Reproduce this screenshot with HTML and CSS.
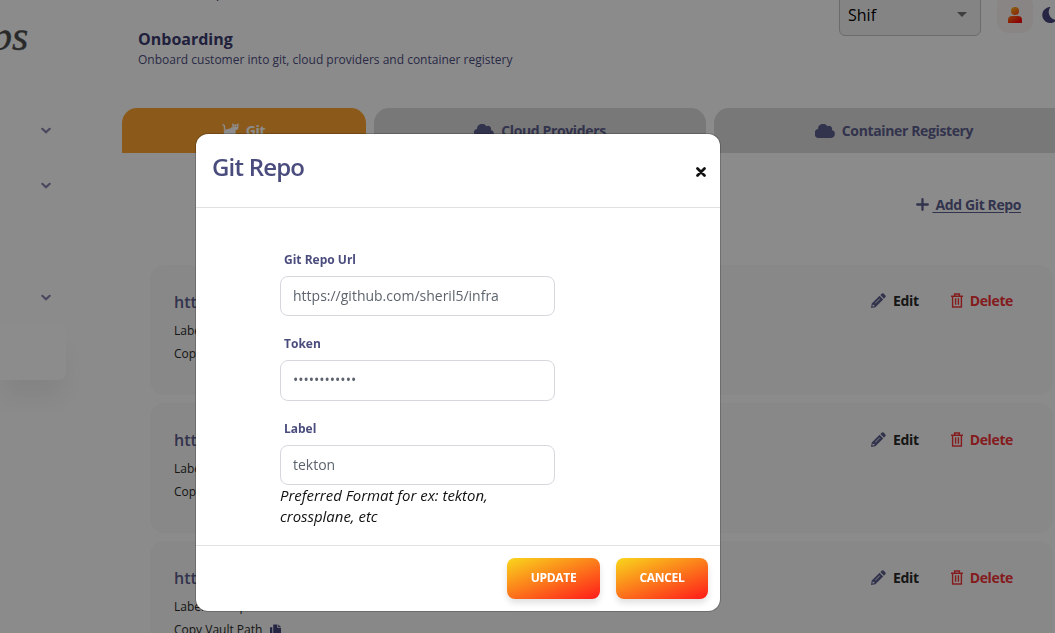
FILE: index.html
```html
<!DOCTYPE html>
<html lang="en">
<head>
<meta charset="utf-8">
<title>Onboarding</title>
<link rel="stylesheet" href="styles.css">
</head>
<body>
<svg class="defs" width="0" height="0">
  <defs>
    <linearGradient id="warm" x1="0" y1="0" x2="0.6" y2="1"><stop offset="0" stop-color="#fbc91b"/><stop offset="1" stop-color="#ff0a0a"/></linearGradient>
    <symbol id="cloud" viewBox="0 0 20 14"><path d="M16.700 6.100A3 3 0 0 0 12.300 2.300 5 5 0 0 0 3 4.700v.4A4.500 4.500 0 0 0 4.500 14H16a4 4 0 0 0 .7-7.900z"/></symbol>
    <symbol id="chev" viewBox="0 0 10 7"><path d="M1.300 1.800 5 5.300l3.700-3.500" fill="none" stroke="currentColor" stroke-width="2.200" stroke-linecap="round"/></symbol>
    <symbol id="pencil" viewBox="0 0 14 14"><path fill-rule="evenodd" d="M0 14 .7 9.900 8 2.600l3.400 3.400L4.100 13.300zM8.700 1.900 10.200.5Q11 0 11.700.5l1.800 1.800q.6.700 0 1.500L12.100 5.300zM1.600 10.900l-.3 1.800 1.800-.3v-1.100H2v-.8zM3.800 9.300l4.100-4.100.4.400-4.100 4.100z"/></symbol>
    <symbol id="trash" viewBox="0 0 12 15"><path d="M0 3.300h12M3.600 3V1h4.800v2M1.600 3.500V14h8.800V3.500M4.600 5.300v6.400M7.400 5.300v6.400" fill="none" stroke="currentColor" stroke-width="1.400"/></symbol>
    <symbol id="copy" viewBox="0 0 12 13"><path d="M0 3h2.500v8H8v2H0zM3.500 0H8v3.500h4V10H3.500zM9 0l3 2.700H9z"/></symbol>
  </defs>
</svg>
<div class="app">
  <aside class="sidebar">
    <div class="logo">ps</div>
    <div class="menu">
      <svg class="chev"><use href="#chev"/></svg>
      <svg class="chev"><use href="#chev"/></svg>
      <svg class="chev last"><use href="#chev"/></svg>
    </div>
    <div class="active-item"></div>
  </aside>
  <main class="main">
    <header class="top">
      <div class="heading">
        <div class="crumbs"><span>Home / Setup</span><b>Onboarding</b></div>
        <h1>Onboarding</h1>
        <p>Onboard customer into git, cloud providers and container registery</p>
      </div>
      <div class="tools">
        <div class="select">Shif<span class="caret"></span></div>
        <div class="avatar"><svg width="14" height="16" viewBox="0 0 14 16"><path d="M11 4a4 4 0 1 1-8 0 4 4 0 0 1 8 0zM0 16v-3q0-4 4-4h6q4 0 4 4v3z"/></svg></div>
        <svg class="moon" width="16" height="16" viewBox="0 0 16 16"><path d="M9.500 0A8 8 0 1 0 15.500 13 8 8 0 0 1 9.500 0z"/></svg>
      </div>
    </header>
    <nav class="tabs">
      <div class="tab tab-git"><svg width="17" height="15" viewBox="0 0 17 15"><path d="M.5 1.800q2 0 2 2.200v3.500" fill="none" stroke="currentColor" stroke-width="1.400"/><path d="M1.800 8.500q1-2.500 4-2.500 2.500 0 4.200-2 1 2.800 3.600 3.200V15H11l-1-3-3.500.4L5 15H2z"/><path d="M10.300 0 12 1.600h2.800L16.500 0v4a3.100 3.100 0 0 1-6.200 0z"/><path d="M11.600 3.200h1.200M14 3.200h1.200" stroke="#fda430"/></svg><span>Git</span></div>
      <div class="tab tab-cloud"><svg width="20" height="14"><use href="#cloud"/></svg><span>Cloud Providers</span></div>
      <div class="tab tab-reg"><svg width="20" height="14"><use href="#cloud"/></svg><span>Container Registery</span></div>
    </nav>
    <div class="add"><svg width="13" height="13" viewBox="0 0 13 13"><path d="M6.500 1.200v10.600M1.200 6.500h10.600" stroke="currentColor" stroke-width="2.300" stroke-linecap="round"/></svg><span>&nbsp;Add Git Repo</span></div>
    <section class="repos">
      <article class="repo">
        <div class="info"><h2>https:</h2><p>Label:</p><p>Copy</p></div>
        <div class="acts"><svg width="15" height="15"><use href="#pencil"/></svg><span>Edit</span><span class="del"><svg width="12" height="15"><use href="#trash"/></svg>Delete</span></div>
      </article>
      <article class="repo">
        <div class="info"><h2>https:</h2><p>Label:</p><p>Copy</p></div>
        <div class="acts"><svg width="15" height="15"><use href="#pencil"/></svg><span>Edit</span><span class="del"><svg width="12" height="15"><use href="#trash"/></svg>Delete</span></div>
      </article>
      <article class="repo">
        <div class="info"><h2>https:</h2><p>Label: crossplane</p><p>Copy Vault Path <svg class="copy" width="11" height="13"><use href="#copy"/></svg></p></div>
        <div class="acts"><svg width="15" height="15"><use href="#pencil"/></svg><span>Edit</span><span class="del"><svg width="12" height="15"><use href="#trash"/></svg>Delete</span></div>
      </article>
    </section>
  </main>
</div>
<div class="overlay">
  <div class="modal">
    <div class="modal-head"><h3>Git Repo</h3><svg width="10" height="10" viewBox="0 0 10 10"><path d="M1.500 1.500l7 7M8.500 1.500l-7 7" stroke="#111" stroke-width="2.700" stroke-linecap="round"/></svg></div>
    <div class="modal-body">
      <label>Git Repo Url</label>
      <div class="field">https://github.com/sheril5/infra</div>
      <label>Token</label>
      <div class="field tall">••••••••••••</div>
      <label>Label</label>
      <div class="field">tekton</div>
      <div class="hint">Preferred Format for ex: tekton, crossplane, etc</div>
    </div>
    <div class="modal-foot"><div class="btn update">UPDATE</div><div class="btn">CANCEL</div></div>
  </div>
</div>
</body>
</html>
```
FILE: styles.css
```css
* { box-sizing: border-box; }
body { margin: 0; height: 633px; overflow: hidden; background: #fefefe; font-family: "Open Sans", "Noto Sans", sans-serif; color: #222; }
h1, h2, h3, p { margin: 0; }
svg { fill: currentColor; flex: none; }
.defs { position: absolute; }
.app { display: flex; height: 633px; overflow: hidden; }
.sidebar { width: 122px; flex: none; color: #8583ab; }
.logo { height: 120px; padding: 12px 0 0; margin-left: -9px; font: italic 42px/48px "Liberation Serif", serif; color: #4c4c4c; -webkit-text-stroke: .4px #4c4c4c; }
.menu { display: flex; flex-direction: column; padding: 7px 0 0 41px; }
.chev { width: 10px; height: 7px; margin-bottom: 48px; }
.chev.last { margin: 57px 0 23px; }
.active-item { width: 66px; height: 56px; background: #fff; border-radius: 0 8px 8px 0; box-shadow: 0 20px 27px rgba(0,0,0,.06); }
.main { flex: 1; min-width: 0; color: #5c5d8c; }
.top { display: flex; justify-content: space-between; height: 108px; }
.heading { padding-left: 16px; }
.crumbs { display: flex; height: 20px; margin-top: -18px; font-size: 14px; line-height: 20px; white-space: pre; color: #343468; }
.crumbs span { width: 98px; padding-left: 1px; letter-spacing: -.4px; }
.crumbs b { letter-spacing: -.4px; }
h1 { margin-top: 25px; font-size: 16px; line-height: 24px; color: #3b3b70; }
.heading p { font-size: 12px; line-height: 17px; color: #4c4d7e; }
.tools { display: flex; flex: none; width: 216px; }
.select { flex: none; width: 142px; height: 46px; margin-top: -10px; padding: 12px 8px 8px; border: 1px solid #c4c4c4; border-radius: 6px; background: #f1f1f1; color: #000; font-size: 16px; line-height: 22px; display: flex; justify-content: space-between; align-items: center; }
.caret { border: 5px solid transparent; border-top-color: #737373; border-bottom: 0; margin: -1px 5px 0 0; }
.avatar { flex: none; width: 36px; height: 40px; margin: -7px 8px 0 16px; padding: 14px 11px; border-radius: 12px; background: #f9f2f2; }
.avatar svg { display: block; fill: url(#warm); }
.moon { margin-top: 7px; color: #45457c; }
.tabs { display: flex; gap: 8px; }
.tab { flex: none; height: 45px; display: flex; justify-content: center; align-items: center; gap: 7px; border-radius: 15px 15px 0 0; background: #dadada; font-size: 14px; font-weight: 700; letter-spacing: -.37px; }
.tab-git { width: 244px; padding-right: 1px; background: #fda430; color: #fff; }
.tab-cloud { width: 332px; }
.tab-reg { width: 400px; padding-right: 40px; }
.add { display: flex; justify-content: flex-end; align-items: center; gap: 3px; margin: 41px 34px 0; height: 20px; font-size: 14px; font-weight: 700; letter-spacing: -.4px; }
.add span { text-decoration: underline; text-underline-offset: 2px; }
.repos { width: 903px; margin: 51px 0 0 28px; display: flex; flex-direction: column; gap: 8px; }
.repo { height: 130px; padding: 23px 40px 0 24px; border-radius: 14px; background: #f8f8f8; display: flex; justify-content: space-between; flex: none; }
.repo p { height: 23px; font-size: 12px; line-height: 23px; color: #292929; white-space: nowrap; }
h2 { font-size: 16px; line-height: 28px; font-weight: 600; margin-bottom: 3px; }
.copy { margin-left: 4px; vertical-align: -3px; color: #44467a; }
.acts { display: flex; align-items: center; height: 24px; gap: 7px; font-size: 14px; font-weight: 700; letter-spacing: -.37px; }
.repo + .repo .acts { margin-top: 1px; }
.acts span { color: #292929; }
.acts .del { display: flex; align-items: center; gap: 7px; margin-left: 25px; color: #f03338; }
.overlay { position: fixed; inset: 0; background: rgba(0,0,0,.45); }
.modal { position: absolute; left: 196px; top: 134px; width: 524px; height: 477px; background: #fff; border-radius: 12px; box-shadow: 0 0 0 1px rgba(0,0,0,.2); color: #4a4c7d; display: flex; flex-direction: column; }
.modal-head { height: 74px; padding: 16px 14px 0 16px; border-bottom: 1px solid #e0e1e3; display: flex; justify-content: space-between; }
h3 { font-size: 24px; line-height: 34px; font-weight: 600; letter-spacing: -.8px; }
.modal-head svg { margin-top: 17px; }
.modal-body { flex: 1; padding: 42px 84px 0; }
label { display: block; height: 26px; padding-left: 4px; font-size: 12px; line-height: 19px; font-weight: 700; }
.field { width: 275px; height: 40px; margin-bottom: 18px; padding: 0 12px; border: 1px solid #d6d8dd; border-radius: 8px; font-size: 14px; line-height: 38px; color: #5d646e; }
.field.tall { height: 41px; }
.hint { width: 240px; margin-top: -18px; font-size: 14.950px; line-height: 21px; font-style: italic; color: #111; }
.modal-foot { height: 66px; padding: 12px 12px 0; border-top: 1px solid #e0e1e3; display: flex; justify-content: flex-end; gap: 16px; }
.btn { width: 92px; height: 41px; border-radius: 8px; background: linear-gradient(160deg, #f9d71c, #ff1a1a); box-shadow: 0 4px 6px rgba(0,0,0,.12); color: #fff; font-size: 12px; line-height: 39px; font-weight: 700; text-align: center; letter-spacing: -.3px; }
.update { width: 93px; }
```
